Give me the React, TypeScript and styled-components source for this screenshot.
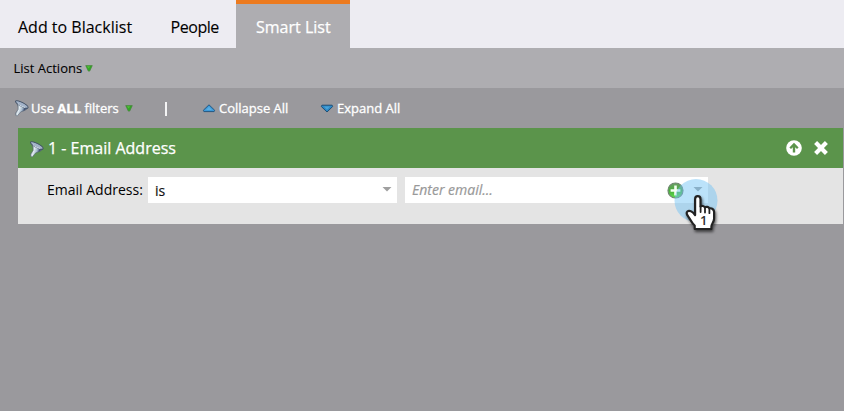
import React from "react";
import styled, { createGlobalStyle } from "styled-components";

const GlobalStyle = createGlobalStyle`
  *, *::before, *::after { box-sizing: border-box; }
  body { margin: 0; background: #9a999d; font-family: "Open Sans", sans-serif; }
  svg { display: block; flex: none; }
`;

const Page = styled.div`
  width: 844px;
  height: 411px;
  overflow: hidden;
  background: #9a999d;
`;

const TabBar = styled.nav`
  display: flex;
  height: 48px;
  background: #edecf2;
`;

const Tab = styled.div<{ $width: number; $pad: number; $active?: boolean; $spacing?: number }>`
  width: ${(p) => p.$width}px;
  height: 48px;
  padding: ${(p) => (p.$active ? 12 : 16)}px 0 0 ${(p) => p.$pad}px;
  border-top: ${(p) => (p.$active ? "4px solid #ec7a1e" : "none")};
  background: ${(p) => (p.$active ? "#aeadb1" : "transparent")};
  color: ${(p) => (p.$active ? "#fff" : "#000")};
  font-size: 16px;
  line-height: 22px;
  letter-spacing: ${(p) => p.$spacing ?? 0}px;
  -webkit-text-stroke: ${(p) => (p.$active ? 0.25 : 0.1)}px currentColor;
  white-space: nowrap;
`;

const Actions = styled.div`
  display: flex;
  align-items: center;
  height: 40px;
  padding-left: 13.5px;
  background: #aeadb1;
  color: #000;
`;

const FilterBar = styled.div`
  display: flex;
  align-items: center;
  height: 40px;
  padding-left: 14px;
  color: #fff;
`;

const Label = styled.span<{ $width: number; $gap?: number; $spacing?: number; $weight?: number }>`
  flex: none;
  width: ${(p) => p.$width}px;
  padding-left: ${(p) => p.$gap ?? 0}px;
  font-size: 13px;
  line-height: 20px;
  letter-spacing: ${(p) => p.$spacing ?? 0}px;
  -webkit-text-stroke: ${(p) => p.$weight ?? 0.3}px currentColor;
  white-space: nowrap;
`;

const Separator = styled.span`
  width: 2px;
  height: 14px;
  margin: 1px 35px 0 32px;
  background: #f4f4f5;
`;

const Card = styled.section`
  width: 825px;
  margin-left: 18px;
  background: #e4e4e4;
`;

const CardHeader = styled.header`
  display: flex;
  align-items: center;
  height: 40px;
  padding: 0 14px 0 11px;
  background: #5b944b;
  color: #fff;
`;

const CardTitle = styled.h2`
  flex: 1;
  margin: 0 0 0 4px;
  font-size: 16px;
  font-weight: 400;
  line-height: 22px;
  -webkit-text-stroke: .25px currentColor;
`;

const HeaderIcon = styled.span`
  padding-top: 3px;
`;

const HeaderActions = styled.div`
  display: flex;
  align-items: center;
  gap: 11px;
`;

const CardBody = styled.div`
  display: flex;
  height: 56px;
  padding: 9px 0 0 29px;
`;

const FieldLabel = styled.label`
  width: 101px;
  font-size: 14px;
  line-height: 26px;
  white-space: nowrap;
`;

const Select = styled.div<{ $width: number }>`
  position: relative;
  display: flex;
  align-items: center;
  width: ${(p) => p.$width}px;
  height: 26px;
  margin-right: 8px;
  padding: 0 5px 0 7px;
  background: #fff;
`;

const Value = styled.span<{ $placeholder?: boolean }>`
  flex: 1;
  padding-top: ${(p) => (p.$placeholder ? 0 : 2)}px;
  color: ${(p) => (p.$placeholder ? "#999" : "#111")};
  font-size: 14px;
  font-style: ${(p) => (p.$placeholder ? "italic" : "normal")};
  line-height: 24px;
  -webkit-text-stroke: .2px currentColor;
`;

const Arrow = styled.span`
  width: 10px;
  height: 5px;
  margin-bottom: 2px;
  background: #a0a0a0;
  clip-path: polygon(0 0, 100% 0, 50% 100%);
`;

const AddSlot = styled.span`
  margin-right: 9px;
`;

const Pointer = styled.div`
  position: absolute;
  left: 269px;
  top: 1px;
  width: 50px;
  height: 64px;
`;

const Step = styled.span`
  position: absolute;
  left: 26px;
  top: 33px;
  color: #333;
  font-size: 13px;
  font-weight: 600;
  line-height: 18px;
`;

const FunnelIcon = () => (
  <svg width="15" height="17" viewBox="0 0 15 17">
    <defs>
      <linearGradient id="metal" x1="0" y1=".3" x2="1" y2=".7">
        <stop offset="0" stopColor="#4c5968" />
        <stop offset=".32" stopColor="#e2ecf2" />
        <stop offset=".55" stopColor="#a5b8cb" />
        <stop offset=".72" stopColor="#425374" />
        <stop offset="1" stopColor="#8595ae" />
      </linearGradient>
    </defs>
    <path d="M1.6 1.1C2.8 3.3 4.4 6.2 4.1 9.4L1.6 13.2l.2 2.2 1.5.5 3.5-4.1c2.8-.8 5.8-1.8 7-3.8Z" fill="url(#metal)" stroke="#4c5a6c" strokeWidth=".5" />
    <ellipse cx="7.8" cy="4.4" rx="7" ry="1.9" transform="rotate(28 7.8 4.4)" fill="#a3b3c9" stroke="#3f4e64" strokeWidth=".9" />
    <path d="M3.8 3.5c2 2.1 4.8 3.5 7.5 4" fill="none" stroke="#dce6ef" strokeWidth=".9" />
  </svg>
);

const GreenArrow = () => (
  <svg width="8" height="7" viewBox="0 0 8 7">
    <path d="M.7.6h6.6L5 5.6c-.6 1-1.4 1-2 0Z" fill="#32a526" stroke="#458239" strokeWidth=".6" />
    <path d="M1.8 1.3h3.2L3.8 3.6Z" fill="#55be3c" />
  </svg>
);

const BlueArrow = ({ up = false }: { up?: boolean }) => (
  <svg width="14" height="9" viewBox="0 0 14 9">
    {up ? (
      <>
        <path d="m7 .8 5.7 5.5-.6 1.3H1.9l-.6-1.3Z" fill="#3d9ad9" stroke="#245781" />
        <path d="M7 2.8 4 6h6Z" fill="#5aaee3" />
      </>
    ) : (
      <>
        <path d="M1.9 1.2h10.2l.6 1.3L7 8 1.3 2.5Z" fill="#2d88c5" stroke="#1d4f78" />
        <path d="M4 2.5h6L7 5.8Z" fill="#49a2d8" />
      </>
    )}
  </svg>
);

const UpIcon = () => (
  <svg width="16" height="16" viewBox="0 0 16 16">
    <circle cx="8" cy="8" r="7.8" fill="#fff" />
    <path d="m8 2.8 4.6 4.7-1.6 1.6-1.8-1.8v5.2H6.8V7.3L5 9.1 3.4 7.5Z" fill="#5b944b" />
  </svg>
);

const CloseIcon = () => (
  <svg width="16" height="16" viewBox="0 0 16 16">
    <path d="m2.6 2.6 10.8 10.8M13.4 2.6 2.6 13.4" stroke="#fff" strokeWidth="4.2" />
  </svg>
);

const AddIcon = () => (
  <svg width="17" height="17" viewBox="0 0 17 17">
    <defs>
      <linearGradient id="green" x1="0" y1="0" x2="0" y2="1">
        <stop stopColor="#6c9e68" />
        <stop offset=".5" stopColor="#48ad3b" />
        <stop offset="1" stopColor="#62df4c" />
      </linearGradient>
    </defs>
    <circle cx="8.5" cy="8.5" r="7.5" fill="url(#green)" stroke="#6f8770" strokeWidth="1.2" />
    <path d="M8.5 3.6v9.8M3.6 8.5h9.8" stroke="#f4fff2" strokeWidth="2.6" />
  </svg>
);

const HandPointer = () => (
  <Pointer>
    <svg width="50" height="64" viewBox="0 0 50 64">
      <defs>
        <filter id="hand-shadow" x="-20%" y="-20%" width="150%" height="150%">
          <feDropShadow dx="1" dy="2" stdDeviation="1.4" floodOpacity=".6" />
        </filter>
      </defs>
      <circle cx="22" cy="22.5" r="21.5" fill="#70c3f5" fillOpacity=".48" />
      <path
        d="M21.1 21.2c0-4 5.4-4 5.4 0v7.3c1.2-1 3.6-.7 4.4.9 1.3-1.1 3.7-.5 4.4 1 2.4-.6 4.8 1 4.8 3.6v6.6c0 3.7-2.7 4.9-2.7 8.1V51H20.7v-3.5c-3-2.3-3.5-5.1-5.9-8.2-2-2.5-3.2-4.3-1.4-5.8 2.1-1.7 5.3.2 7.7 3.6Z"
        fill="#fff" stroke="#222" strokeWidth="2.2" strokeLinejoin="round" filter="url(#hand-shadow)"
      />
      <path d="M26.6 28.5v5.5M31 29.6v5M35.4 30.7v4.5" stroke="#222" strokeWidth="1.8" strokeLinecap="round" />
    </svg>
    <Step>1</Step>
  </Pointer>
);

export default function App() {
  return (
    <Page>
      <GlobalStyle />
      <TabBar>
        <Tab $width={152} $pad={18}>Add to Blacklist</Tab>
        <Tab $width={84} $pad={18.5} $spacing={-0.45}>People</Tab>
        <Tab $width={114} $pad={20} $active>Smart List</Tab>
      </TabBar>
      <Actions>
        <Label $width={71} $weight={0.1}>List Actions</Label>
        <GreenArrow />
      </Actions>
      <FilterBar>
        <FunnelIcon />
        <Label $width={96} $gap={2}>Use <b>ALL</b> filters</Label>
        <GreenArrow />
        <Separator />
        <BlueArrow up />
        <Label $width={104} $gap={3}>Collapse All</Label>
        <BlueArrow />
        <Label $width={80} $gap={3}>Expand All</Label>
      </FilterBar>
      <Card>
        <CardHeader>
          <HeaderIcon><FunnelIcon /></HeaderIcon>
          <CardTitle>1 - Email Address</CardTitle>
          <HeaderActions>
            <UpIcon />
            <CloseIcon />
          </HeaderActions>
        </CardHeader>
        <CardBody>
          <FieldLabel>Email Address:</FieldLabel>
          <Select $width={249}>
            <Value>is</Value>
            <Arrow />
          </Select>
          <Select $width={303}>
            <Value $placeholder>Enter email...</Value>
            <AddSlot><AddIcon /></AddSlot>
            <Arrow />
            <HandPointer />
          </Select>
        </CardBody>
      </Card>
    </Page>
  );
}
